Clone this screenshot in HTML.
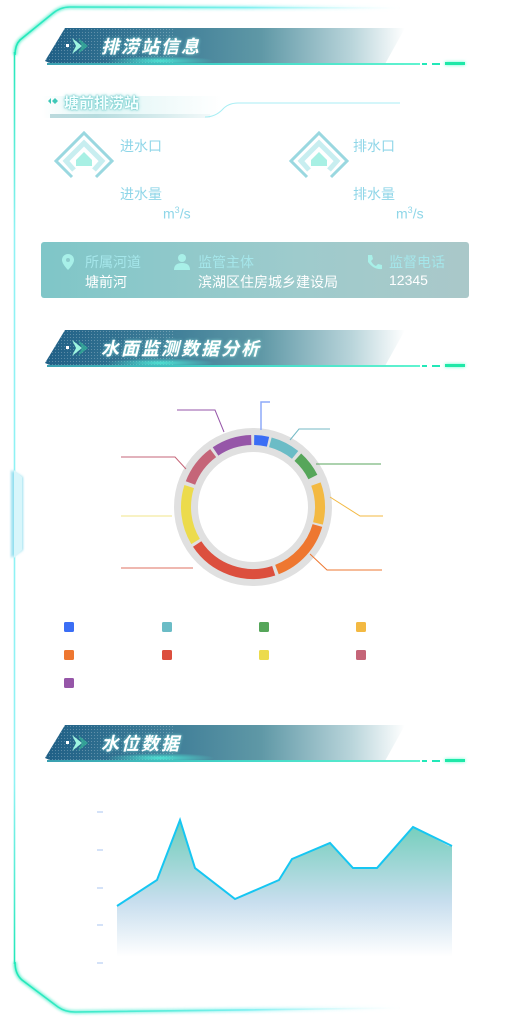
<!DOCTYPE html>
<html><head><meta charset="utf-8"><style>
*{margin:0;padding:0;box-sizing:border-box}
body{width:527px;height:1019px;background:#fff;position:relative;overflow:hidden;font-family:"Liberation Sans","Noto Sans CJK SC",sans-serif}
.abs{position:absolute}
.hdr{position:absolute;left:45px;width:425px;height:40px}
.hdr .bar{position:absolute;left:0;top:0;width:360px;height:36px;background:linear-gradient(90deg,#1f5f86 0%,#3f7e98 35%,#5f98a6 60%,#b8d4da 85%,rgba(255,255,255,0) 100%);clip-path:polygon(7px 36px,0 33px,20px 0,360px 0,340px 36px);}
.hdr .dots{position:absolute;left:0;top:0;width:130px;height:36px;background-image:radial-gradient(rgba(255,255,255,.25) 0.6px,transparent 0.8px);background-size:3px 3px;clip-path:polygon(7px 36px,0 33px,20px 0,130px 0,130px 36px);}
.hdr .glow{position:absolute;left:60px;top:28px;width:110px;height:10px;background:radial-gradient(ellipse at center,rgba(80,240,220,.9),rgba(80,240,220,0) 70%)}
.hdr .line{position:absolute;left:2px;top:35px;width:373px;height:2px;background:linear-gradient(90deg,#3a9fb0,#43d6c8 50%,#60f4d0)}
.hdr .d1{position:absolute;left:377px;top:35px;width:5px;height:2px;background:#22e8b8}
.hdr .d2{position:absolute;left:387px;top:35px;width:8px;height:2px;background:#22e8b8}
.hdr .d3{position:absolute;left:400px;top:34px;width:20px;height:3px;background:#1ee8a8;box-shadow:0 0 3px #5fffd0}
.hdr .t{position:absolute;left:56px;top:5px;color:#fff;font-size:18px;font-weight:bold;font-style:italic;letter-spacing:2px;text-shadow:0 0 3px rgba(160,255,240,.7)}
.hdr svg{position:absolute;left:20px;top:8px}
.lbl{color:#8fd6e8;font-size:14px}
</style></head><body>
<!-- frame -->
<svg class="abs" style="left:0;top:0" width="527" height="1019">
<defs>
<linearGradient id="ft" gradientUnits="userSpaceOnUse" x1="15" y1="0" x2="400" y2="0"><stop offset="0" stop-color="#20e8b8"/><stop offset=".6" stop-color="#7ff0f0"/><stop offset="1" stop-color="#e0fbff" stop-opacity="0"/></linearGradient>
<linearGradient id="fl" gradientUnits="userSpaceOnUse" x1="0" y1="50" x2="0" y2="965"><stop offset="0" stop-color="#20e8b8"/><stop offset=".2" stop-color="#8ff2f4"/><stop offset=".8" stop-color="#8ff2f4"/><stop offset="1" stop-color="#20e8b8"/></linearGradient>
<filter id="gl"><feGaussianBlur stdDeviation="1.3"/></filter>
</defs>
<g filter="url(#gl)" opacity=".6">
<path d="M400 8 L70 7 Q60 7 52 14 L20 40 Q15 45 15 55" stroke="url(#ft)" stroke-width="4" fill="none"/>
<path d="M400 1008 L75 1012 Q65 1012 58 1007 L22 980 Q15 974 15 962" stroke="url(#ft)" stroke-width="4" fill="none"/>
</g>
<path d="M400 8 L70 7 Q60 7 52 14 L20 40 Q15 45 15 55" stroke="url(#ft)" stroke-width="1.6" fill="none"/>
<path d="M400 1008 L75 1012 Q65 1012 58 1007 L22 980 Q15 974 15 962" stroke="url(#ft)" stroke-width="1.6" fill="none"/>
<rect x="13.7" y="52" width="1.6" height="912" fill="url(#fl)"/>
<g filter="url(#gl)"><path d="M11 470 L23 477 L23 550 L11 558Z" fill="#7fd8ec" opacity=".8"/></g>
<path d="M14 470 L22 477 L22 550 L14 558Z" fill="#d8f6fb"/>
</svg>

<!-- header 1 -->
<div class="hdr" style="top:28px"><div class="bar"></div><div class="dots"></div><div class="glow"></div><div class="line"></div><div class="d1"></div><div class="d2"></div><div class="d3"></div>
<svg width="30" height="20"><rect x="1" y="8" width="3" height="3" fill="#fff"/><path d="M7 2 L17 10 L7 18 L11 10Z" fill="#9ff5e0"/><path d="M13 2 L23 10 L13 18 L17 10Z" fill="#36b89a" opacity=".7"/></svg>
<div class="t">排涝站信息</div></div>

<!-- sub title -->
<div class="abs" style="left:42px;top:96px;width:180px;height:22px;background:linear-gradient(90deg,rgba(200,240,240,0),rgba(190,235,235,.5) 30%,rgba(255,255,255,0))"></div>
<div class="abs" style="left:50px;top:114px;width:160px;height:4px;background:linear-gradient(90deg,rgba(70,150,160,.35),rgba(70,150,160,.05))"></div>
<svg class="abs" style="left:0;top:95px" width="527" height="30"><path d="M205 22 Q215 22 222 15 Q228 8 238 8 L400 8" stroke="#a8eef4" fill="none" stroke-width="1"/><path d="M48 6 L51 3 L51 9Z M52 6 L55 3 L58 6 L55 9Z" fill="#3fc8b8"/></svg>
<div class="abs" style="left:64px;top:92px;color:#f4ffff;font-size:15px;font-weight:bold;text-shadow:0 0 2px #6cc,0 0 1px #4aa,0 0 4px #9dd">塘前排涝站</div>

<!-- icons -->
<svg class="abs" style="left:52px;top:130px" width="64" height="52">
<path d="M20 47 L4 31 L32 3 L60 31 L44 47" stroke="#9ad8e0" stroke-width="3" fill="none"/>
<path d="M22 40 L14 31 L32 13 L50 31 L42 40" stroke="#c8eef0" stroke-width="5" fill="none"/>
<path d="M24 30 L32 22 L40 30 L40 36 L24 36Z" fill="#a8f0e4"/>
</svg>
<svg class="abs" style="left:287px;top:130px" width="64" height="52">
<path d="M20 47 L4 31 L32 3 L60 31 L44 47" stroke="#9ad8e0" stroke-width="3" fill="none"/>
<path d="M22 40 L14 31 L32 13 L50 31 L42 40" stroke="#c8eef0" stroke-width="5" fill="none"/>
<path d="M24 30 L32 22 L40 30 L40 36 L24 36Z" fill="#a8f0e4"/>
</svg>
<div class="abs lbl" style="left:120px;top:136px">进水口</div>
<div class="abs lbl" style="left:120px;top:184px">进水量</div>
<div class="abs lbl" style="left:163px;top:205px">m<sup style="font-size:9px">3</sup>/s</div>
<div class="abs lbl" style="left:353px;top:136px">排水口</div>
<div class="abs lbl" style="left:353px;top:184px">排水量</div>
<div class="abs lbl" style="left:396px;top:205px">m<sup style="font-size:9px">3</sup>/s</div>

<!-- info bar -->
<div class="abs" style="left:41px;top:242px;width:428px;height:56px;border-radius:3px;background:linear-gradient(90deg,#7fc6c8,#9ecbcc 60%,#aac8c9)"></div>
<svg class="abs" style="left:60px;top:253px" width="20" height="20"><path d="M8 1 A6 6 0 0 1 14 7 C14 11 8 17 8 17 C8 17 2 11 2 7 A6 6 0 0 1 8 1Z" fill="#a8f0e8"/><circle cx="8" cy="7" r="2" fill="#8ccbcc"/></svg>
<svg class="abs" style="left:172px;top:252px" width="22" height="20"><circle cx="10" cy="6" r="4" fill="#a8f0e8"/><path d="M2 18 Q2 11 10 11 Q18 11 18 18Z" fill="#a8f0e8"/></svg>
<svg class="abs" style="left:365px;top:253px" width="20" height="20"><path d="M3 2 L7 2 L8 6 L6 8 Q8 12 11 13 L13 11 L17 12 L17 16 Q9 17 3 9Z" fill="#a8f0e8"/></svg>
<div class="abs" style="left:85px;top:252px;color:#a5e6ea;font-size:14px">所属河道</div>
<div class="abs" style="left:198px;top:252px;color:#a5e6ea;font-size:14px">监管主体</div>
<div class="abs" style="left:389px;top:252px;color:#a5e6ea;font-size:14px">监督电话</div>
<div class="abs" style="left:85px;top:272px;color:#fff;font-size:14px">塘前河</div>
<div class="abs" style="left:198px;top:272px;color:#fff;font-size:14px">滨湖区住房城乡建设局</div>
<div class="abs" style="left:389px;top:272px;color:#fff;font-size:14px">12345</div>

<!-- header 2 -->
<div class="hdr" style="top:330px"><div class="bar"></div><div class="dots"></div><div class="glow"></div><div class="line"></div><div class="d1"></div><div class="d2"></div><div class="d3"></div>
<svg width="30" height="20"><rect x="1" y="8" width="3" height="3" fill="#fff"/><path d="M7 2 L17 10 L7 18 L11 10Z" fill="#9ff5e0"/><path d="M13 2 L23 10 L13 18 L17 10Z" fill="#36b89a" opacity=".7"/></svg>
<div class="t">水面监测数据分析</div></div>

<!-- donut -->
<svg class="abs" style="left:0;top:0" width="527" height="1019">
<circle cx="253" cy="507" r="67" stroke="#e0e0e0" stroke-width="24" fill="none"/>
<g fill="none" stroke-width="10" transform="translate(253 507)">
<circle r="67" stroke="#3b6ef5" stroke-dasharray="14 500" transform="rotate(-89)"/>
<circle r="67" stroke="#6bbcc6" stroke-dasharray="28 500" transform="rotate(-75)"/>
<circle r="67" stroke="#56a65a" stroke-dasharray="25 500" transform="rotate(-48)"/>
<circle r="67" stroke="#f3b942" stroke-dasharray="40 500" transform="rotate(-20)"/>
<circle r="67" stroke="#ee7730" stroke-dasharray="62 500" transform="rotate(16)"/>
<circle r="67" stroke="#dc4f3e" stroke-dasharray="87 500" transform="rotate(72)"/>
<circle r="67" stroke="#ecdb4c" stroke-dasharray="57 500" transform="rotate(149)"/>
<circle r="67" stroke="#c56578" stroke-dasharray="38 500" transform="rotate(201)"/>
<circle r="67" stroke="#9656a8" stroke-dasharray="38 500" transform="rotate(236)"/>
</g>
<g fill="none" stroke-width="1">
<polyline points="261,430 261,402 270,402" stroke="#8eaaf8" stroke-width="1.5"/>
<polyline points="290,440 299,429 330,429" stroke="#74bac6"/>
<polyline points="316,464 381,464" stroke="#5aa55e"/>
<polyline points="330,497 360,516 383,516" stroke="#f3b942"/>
<polyline points="310,554 327,570 382,570" stroke="#ee7730"/>
<polyline points="224,432 215,410 177,410" stroke="#9656a8"/>
<polyline points="186,469 175,457 121,457" stroke="#c56578"/>
<polyline points="172,516 121,516" stroke="#f2e58a"/>
<polyline points="193,568 121,568" stroke="#eaa096" stroke-width="1.5"/>
</g>
<g>
<rect x="64" y="622" width="10" height="10" rx="1.5" fill="#3b6ef5"/>
<rect x="162" y="622" width="10" height="10" rx="1.5" fill="#6bbcc6"/>
<rect x="259" y="622" width="10" height="10" rx="1.5" fill="#56a65a"/>
<rect x="356" y="622" width="10" height="10" rx="1.5" fill="#f3b942"/>
<rect x="64" y="650" width="10" height="10" rx="1.5" fill="#ee7730"/>
<rect x="162" y="650" width="10" height="10" rx="1.5" fill="#dc4f3e"/>
<rect x="259" y="650" width="10" height="10" rx="1.5" fill="#ecdb4c"/>
<rect x="356" y="650" width="10" height="10" rx="1.5" fill="#c56578"/>
<rect x="64" y="678" width="10" height="10" rx="1.5" fill="#9656a8"/>
</g>
<defs><linearGradient id="ar" x1="0" x2="0" y1="0" y2="1"><stop offset="0" stop-color="#6ecdb8"/><stop offset=".6" stop-color="#c8deee"/><stop offset="1" stop-color="#ffffff"/></linearGradient></defs>
<g stroke="#a8c4f0" stroke-width="1"><line x1="97" y1="812" x2="103" y2="812"/><line x1="97" y1="850" x2="103" y2="850"/><line x1="97" y1="888" x2="103" y2="888"/><line x1="97" y1="925" x2="103" y2="925"/><line x1="97" y1="963" x2="103" y2="963"/></g>
<path d="M117 906 L157 880 L180 820 L195 868 L235 899 L279 880 L292 859 L330 843 L353 868 L377 868 L413 827 L449 846 L452 846 L452 957 L117 957Z" fill="url(#ar)"/>
<polyline points="117,906 157,880 180,820 195,868 235,899 279,880 292,859 330,843 353,868 377,868 413,827 452,846" fill="none" stroke="#16c6f2" stroke-width="2"/>
</svg>

<!-- header 3 -->
<div class="hdr" style="top:725px"><div class="bar"></div><div class="dots"></div><div class="glow"></div><div class="line"></div><div class="d1"></div><div class="d2"></div><div class="d3"></div>
<svg width="30" height="20"><rect x="1" y="8" width="3" height="3" fill="#fff"/><path d="M7 2 L17 10 L7 18 L11 10Z" fill="#9ff5e0"/><path d="M13 2 L23 10 L13 18 L17 10Z" fill="#36b89a" opacity=".7"/></svg>
<div class="t">水位数据</div></div>
</body></html>
